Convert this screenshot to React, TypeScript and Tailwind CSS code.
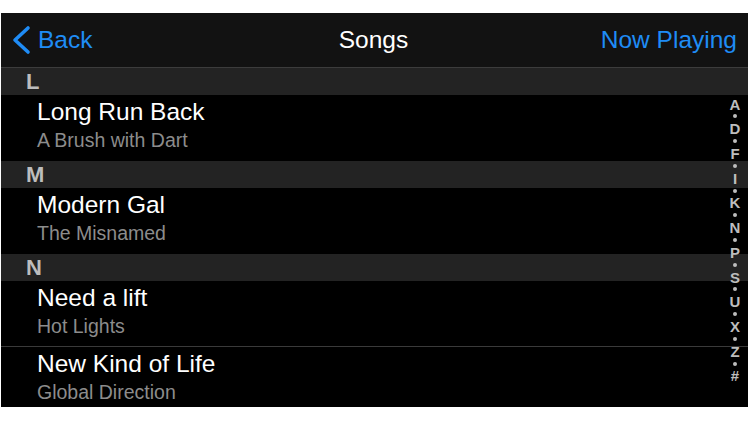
import React from 'react';

interface Song {
  title: string;
  artist: string;
}

interface Section {
  letter: string;
  songs: Song[];
}

const sections: Section[] = [
  { letter: 'L', songs: [{ title: 'Long Run Back', artist: 'A Brush with Dart' }] },
  { letter: 'M', songs: [{ title: 'Modern Gal', artist: 'The Misnamed' }] },
  {
    letter: 'N',
    songs: [
      { title: 'Need a lift', artist: 'Hot Lights' },
      { title: 'New Kind of Life', artist: 'Global Direction' },
    ],
  },
];

const indexLetters = ['A', 'D', 'F', 'I', 'K', 'N', 'P', 'S', 'U', 'X', 'Z', '#'];

function SongRow({ song, last }: { song: Song; last: boolean }) {
  return (
    <div className={`h-[66px] shrink-0 pl-[36px] pt-[3px] bg-black ${last ? '' : 'border-b border-[#3a3a3a]'}`}>
      <div className="text-[24.5px] leading-[28px] text-white">{song.title}</div>
      <div className="mt-[3px] text-[19.5px] leading-[22px] text-[#8c8c8c]">{song.artist}</div>
    </div>
  );
}

export default function App() {
  return (
    <div className="w-[750px] h-[422px] bg-white pt-[13px] pl-[1px] font-['Liberation_Sans',Arial,sans-serif]">
      <div className="relative w-[747px] h-[394px] bg-black overflow-hidden flex flex-col">
        <div className="h-[55px] shrink-0 flex items-center bg-[#121212] border-b border-[#3c3c3c]">
          <div className="flex-1 flex items-center pl-[9px] text-[#1f8cf5]">
            <svg width="22" height="30" viewBox="0 0 22 30" fill="none">
              <path d="M18 3 L5 15 L18 27" stroke="#1f8cf5" strokeWidth="3.6" strokeLinecap="round" strokeLinejoin="round" />
            </svg>
            <span className="ml-[6px] text-[24.5px] leading-none">Back</span>
          </div>
          <div className="flex-1 text-center text-[24.5px] leading-none text-white">Songs</div>
          <div className="flex-1 text-right pr-[11px] text-[24.5px] leading-none text-[#1f8cf5]">Now Playing</div>
        </div>

        {sections.map((section) => (
          <React.Fragment key={section.letter}>
            <div className="h-[27px] shrink-0 flex items-center pl-[25px] bg-[#232323] text-[22px] font-bold text-[#bdbdbd]">
              {section.letter}
            </div>
            {section.songs.map((song, i) => (
              <SongRow key={song.title} song={song} last={i === section.songs.length - 1} />
            ))}
          </React.Fragment>
        ))}

        <div className="absolute right-[4px] top-[85px] w-[18px] h-[284px] flex flex-col items-center justify-between text-[#bdbdbd]">
          {indexLetters.map((l, i) => (
            <React.Fragment key={l}>
              <div className="h-[12px] flex items-center text-[15px] font-bold leading-none">{l}</div>
              {i < indexLetters.length - 1 && (
                <div className="h-[10px] flex items-center">
                  <div className="w-[4px] h-[4px] rounded-full bg-[#bdbdbd]" />
                </div>
              )}
            </React.Fragment>
          ))}
        </div>
      </div>
    </div>
  );
}
